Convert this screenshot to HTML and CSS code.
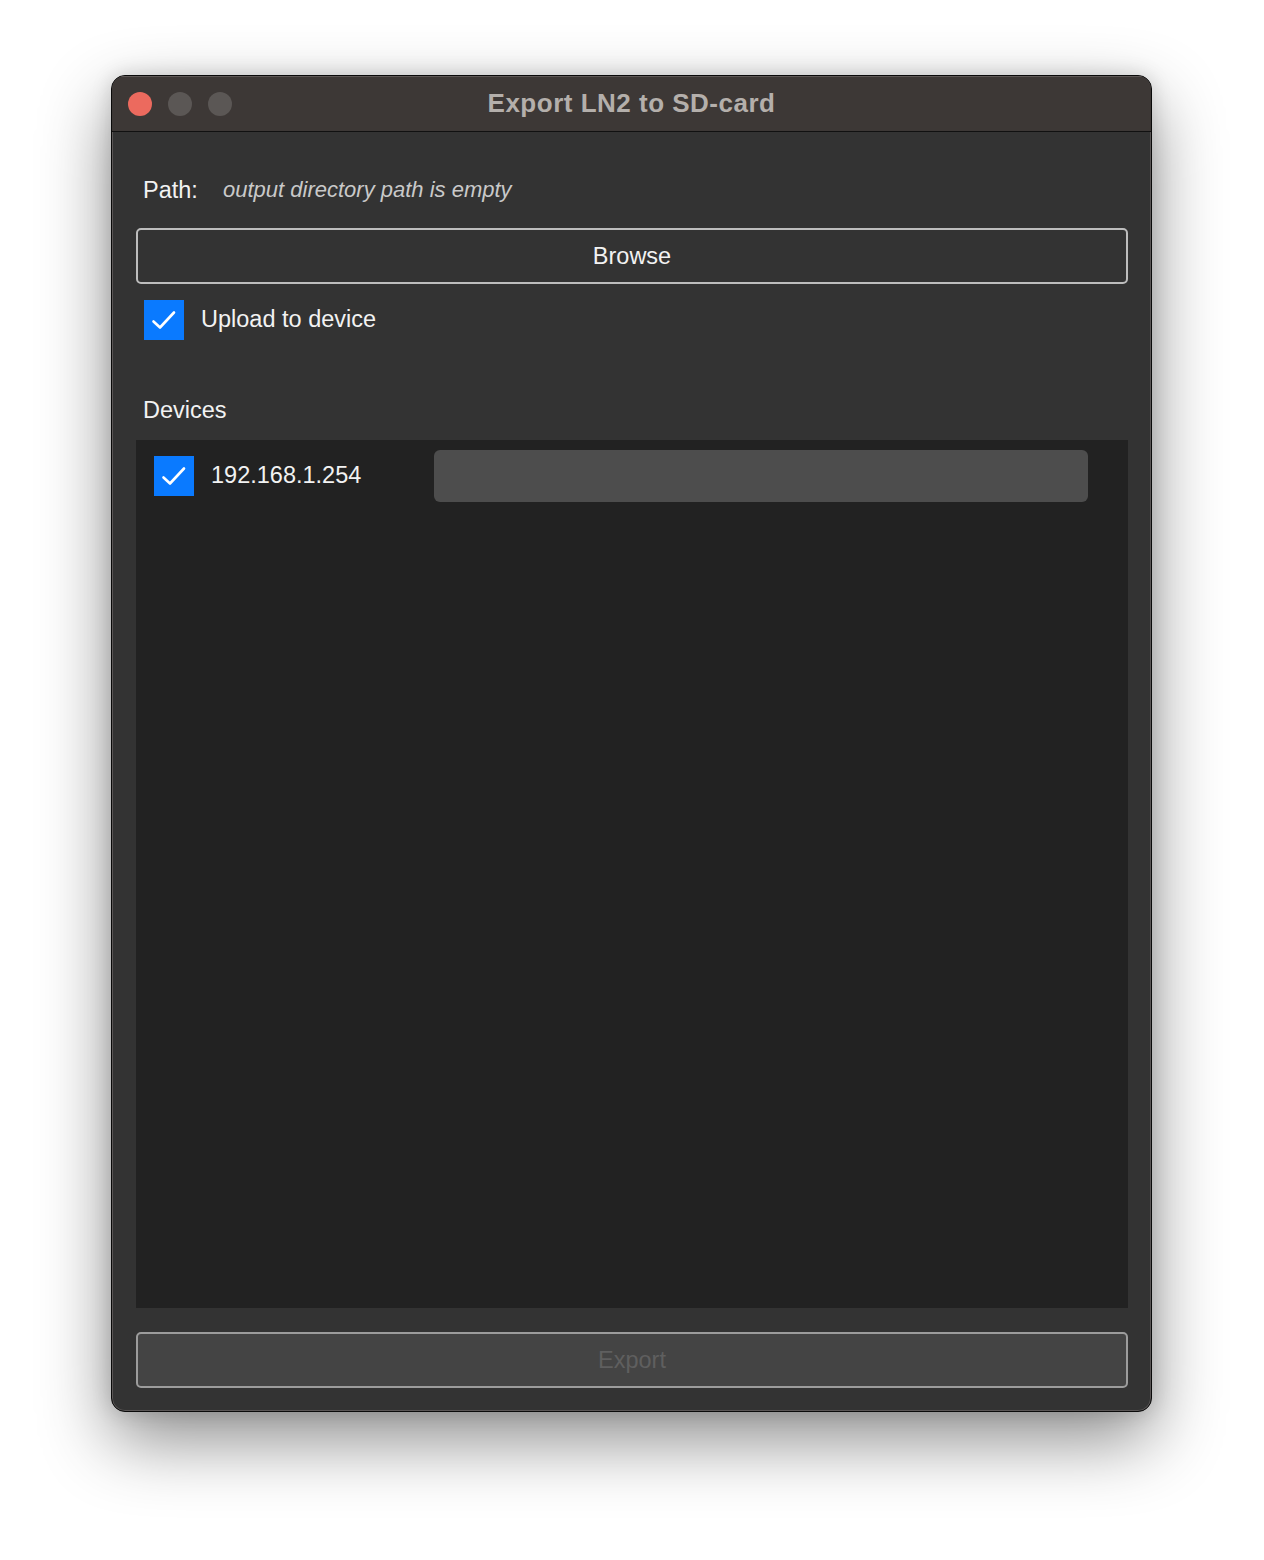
FILE: index.html
```html
<!DOCTYPE html>
<html>
<head>
<meta charset="utf-8">
<link rel="stylesheet" href="styles.css">
</head>
<body>
<div class="window">
  <div class="titlebar">
    <div class="lights">
      <span class="light red"></span>
      <span class="light gray"></span>
      <span class="light gray"></span>
    </div>
    <div class="title">Export LN2 to SD-card</div>
  </div>
  <div class="content">
    <div class="path-row">
      <span class="path-label">Path:</span>
      <span class="path-value">output directory path is empty</span>
    </div>
    <button class="btn browse">Browse</button>
    <label class="check-row upload">
      <span class="checkbox"><svg viewBox="0 0 40 40" width="40" height="40"><path d="M9.5 21.5 L16 27.5 L30 12.5" fill="none" stroke="#fff" stroke-width="2.6" stroke-linecap="round" stroke-linejoin="round"/></svg></span>
      <span class="check-label">Upload to device</span>
    </label>
    <div class="section-label">Devices</div>
    <div class="device-list">
      <div class="device-row">
        <label class="check-row">
          <span class="checkbox"><svg viewBox="0 0 40 40" width="40" height="40"><path d="M9.5 21.5 L16 27.5 L30 12.5" fill="none" stroke="#fff" stroke-width="2.6" stroke-linecap="round" stroke-linejoin="round"/></svg></span>
          <span class="check-label">192.168.1.254</span>
        </label>
        <div class="progress"></div>
      </div>
    </div>
    <button class="btn export" disabled>Export</button>
  </div>
</div>
</body>
</html>
```
FILE: styles.css
```css
html, body {
  margin: 0;
  padding: 0;
  background: #ffffff;
}
body {
  width: 1264px;
  height: 1560px;
  overflow: hidden;
  font-family: "Liberation Sans", Arial, sans-serif;
}
.window {
  margin: 75px 0 0 111px;
  width: 1039px;
  height: 1335px;
  border: 1px solid #0a0a0a;
  border-radius: 14px;
  overflow: hidden;
  background: #333333;
  box-shadow: inset 0 0 0 1px #5a5656, 0 28px 70px rgba(0, 0, 0, 0.45), 0 0 20px rgba(0,0,0,0.15);
  display: flex;
  flex-direction: column;
}
.titlebar {
  height: 55px;
  flex: none;
  background: #3d3836;
  border-bottom: 1px solid #111;
  display: flex;
  align-items: center;
  position: relative;
  box-shadow: inset 0 1px 0 #5e5856;
}
.lights {
  display: flex;
  gap: 16px;
  margin-left: 16px;
  margin-top: 1px;
}
.light {
  width: 24px;
  height: 24px;
  border-radius: 50%;
  display: block;
}
.light.red { background: #ec6a5e; }
.light.gray { background: #5b5755; }
.title {
  position: absolute;
  left: 0;
  right: 0;
  top: 0;
  bottom: 0;
  display: flex;
  align-items: center;
  justify-content: center;
  font-weight: bold;
  font-size: 26px;
  letter-spacing: 0.5px;
  color: #b4afab;
  padding-left: 0;
}
.content {
  flex: 1;
  display: flex;
  flex-direction: column;
  padding: 44px 23px 23px 24px;
  color: #f2f2f2;
  font-size: 23.5px;
}
.path-row {
  height: 28px;
  display: flex;
  align-items: center;
  padding-left: 7px;
}
.path-label {
  width: 80px;
}
.path-value {
  font-style: italic;
  font-size: 22px;
  color: #c9c9c9;
}
.btn {
  font-family: "Liberation Sans", Arial, sans-serif;
  font-size: 23.5px;
  height: 56px;
  border-radius: 5px;
  margin-top: 24px;
  width: 100%;
  flex: none;
}
.browse {
  background: #333333;
  border: 2px solid #bdbdbd;
  color: #f2f2f2;
}
.check-row {
  display: flex;
  align-items: center;
  gap: 17px;
}
.upload {
  margin-top: 16px;
  margin-left: 8px;
  height: 40px;
}
.checkbox {
  width: 40px;
  height: 40px;
  background: #0a7aff;
  display: block;
  flex: none;
}
.checkbox svg { display: block; }
.check-label {
  position: relative;
  top: -1px;
}
.section-label {
  margin-top: 56px;
  height: 28px;
  line-height: 28px;
  padding-left: 7px;
}
.device-list {
  margin-top: 16px;
  flex: 1;
  background: #222222;
  padding: 10px 40px 0 18px;
}
.device-row {
  display: flex;
  align-items: flex-start;
}
.device-row .check-row {
  margin-top: 6px;
  width: 280px;
}
.progress {
  flex: 1;
  height: 52px;
  background: #4d4d4d;
  border-radius: 6px;
}
.export {
  background: #444444;
  border: 2px solid #9c9c9c;
  color: #5f5f5f;
}
```
